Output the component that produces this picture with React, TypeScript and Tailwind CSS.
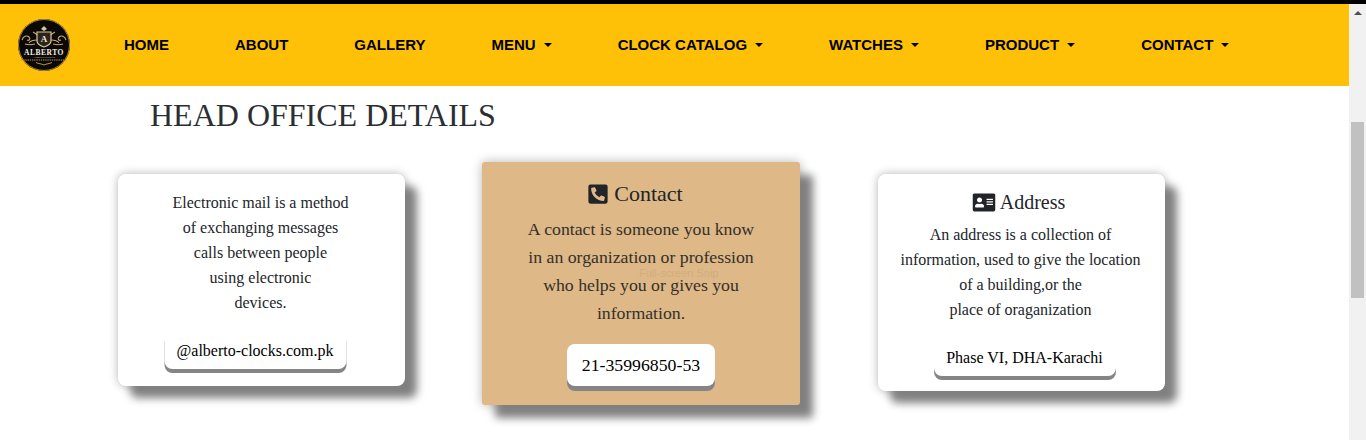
import React from "react";
import { FaPhoneSquareAlt, FaAddressCard } from "react-icons/fa";

const navItems: [string, boolean][] = [
  ["HOME", false],
  ["ABOUT", false],
  ["GALLERY", false],
  ["MENU", true],
  ["CLOCK CATALOG", true],
  ["WATCHES", true],
  ["PRODUCT", true],
  ["CONTACT", true],
];

function Logo() {
  return (
    <svg width="52" height="52" viewBox="0 0 52 52" className="shrink-0">
      <circle cx="26" cy="26" r="26" fill="#0b0906" />
      <circle cx="26" cy="26" r="25.5" fill="none" stroke="#a8823f" strokeWidth="1" />
      <g fill="none" stroke="#c7a873" strokeWidth="1.1">
        <path d="M4 21c1-4 5-5 7-3s0 4-2 3M11 24c2-3 5-3 8-3" />
        <path d="M48 21c-1-4-5-5-7-3s0 4 2 3M41 24c-2-3-5-3-8-3" />
        <path d="M7 25c3 1 6 1 10 0M45 25c-3 1-6 1-10 0" />
        <path d="M15 13c2 1 4 2 5 4M37 13c-2 1-4 2-5 4" />
      </g>
      <path d="M19 13h14v9c0 3-4 5-7 6-3-1-7-3-7-6z" fill="#2a241a" stroke="#d8c6a0" strokeWidth="1.2" />
      <path d="M23 10l3-3 3 3-3 2z" fill="#d8c6a0" />
      <text x="26" y="23" textAnchor="middle" fontFamily="Liberation Serif, serif" fontWeight="700" fontSize="9" fill="#f1e6cf">A</text>
      <text x="26" y="35.500" textAnchor="middle" fontFamily="Liberation Serif, serif" fontWeight="700" fontSize="7.500" letterSpacing="0.5" fill="#f4efe6">ALBERTO</text>
      <text x="26" y="39" textAnchor="middle" fontFamily="Liberation Sans, sans-serif" fontSize="2.400" fill="#b9a98a">ALBERTO CLOCKS</text>
      <path d="M3 41h46" stroke="#b6945a" strokeWidth="1" strokeDasharray="1.4 0.8" />
      <path d="M18 43.500c3 1.500 5 1 8 2.500 3-1.500 5-1 8-2.500" stroke="#b6945a" strokeWidth="1" fill="none" />
    </svg>
  );
}

function NavBar() {
  return (
    <nav className="flex h-[82px] items-center bg-[#ffc107] pl-[18px] pr-4">
      <Logo />
      <ul className="ml-[54px] flex items-center gap-[66px] font-['Liberation_Sans',sans-serif] text-[15px] font-bold leading-5 text-black">
        {navItems.map(([label, caret]) => (
          <li key={label} className="flex items-center whitespace-nowrap">
            {label}
            {caret && (
              <span className="ml-[8px] h-0 w-0 border-x-[4px] border-t-[4px] border-x-transparent border-t-black" />
            )}
          </li>
        ))}
      </ul>
    </nav>
  );
}

function Pill({ children, wide }: { children: React.ReactNode; wide?: boolean }) {
  return (
    <div
      className={
        wide
          ? "flex h-[42px] w-[148px] items-center justify-center rounded-lg bg-white text-[17.760px] text-black shadow-[0_5px_0_#858585]"
          : "flex h-[38px] w-[182px] items-center justify-center rounded-lg bg-white text-[16px] text-black shadow-[0_4px_0_#858585]"
      }
    >
      {children}
    </div>
  );
}

function Cards() {
  return (
    <div className="relative flex items-start pl-[118px] font-['Liberation_Serif',serif] text-[#212529]">
      <section className="mt-[12px] flex w-[287px] flex-col items-center rounded-lg bg-white pb-[17px] pt-4 text-center text-[16px] leading-[25px] shadow-[12px_12px_8px_#808080,0_0_10px_#b5b5b5]">
        <p className="-translate-x-[1px]">
          Electronic mail is a method
          <br />
          of exchanging messages
          <br />
          calls between people
          <br />
          using electronic
          <br />
          devices.
        </p>
        <div className="mt-4 -translate-x-[6.500px]">
          <Pill>@alberto-clocks.com.pk</Pill>
        </div>
      </section>

      <section className="relative ml-[77px] flex w-[318px] flex-col items-center rounded-[3px] bg-[#deb887] pb-[19px] pt-[18px] text-center text-[17.760px] leading-[28px] shadow-[13px_13px_9px_#808080,0_0_11px_#b5b5b5]">
        <h3 className="mb-[7px] flex -translate-x-[6px] items-center text-[22px] leading-[28px]">
          <FaPhoneSquareAlt className="mr-[5px] text-[22px]" />
          Contact
        </h3>
        <p className="text-[#33302b]">
          A contact is someone you know
          <br />
          in an organization or profession
          <br />
          who helps you or gives you
          <br />
          information.
        </p>
        <div className="mt-[17px]">
          <Pill wide>21-35996850-53</Pill>
        </div>
        <span className="absolute left-[157px] top-[104px] font-['Liberation_Sans',sans-serif] text-[11px] leading-[14px] text-[#d2ae7f]">
          Full-screen Snip
        </span>
      </section>

      <section className="ml-[78px] mt-[12px] flex w-[287px] flex-col items-center rounded-lg bg-white pb-[15px] pt-4 text-center text-[16px] leading-[25px] shadow-[12px_12px_8px_#808080,0_0_10px_#b5b5b5]">
        <h3 className="mb-2 flex -translate-x-[2.500px] items-center text-[20px] leading-6">
          <FaAddressCard className="mr-[4px] text-[23px]" />
          Address
        </h3>
        <p className="-translate-x-[1px]">
          An address is a collection of
          <br />
          information, used to give the location
          <br />
          of a building,or the
          <br />
          place of oraganization
        </p>
        <div className="mt-4 translate-x-[3px]">
          <Pill>Phase VI, DHA-Karachi</Pill>
        </div>
      </section>
    </div>
  );
}

function ScrollBar() {
  return (
    <div className="flex h-full w-[17px] shrink-0 flex-col items-center bg-[#f1f1f1]">
      <span className="mt-[7px] h-0 w-0 border-x-[4px] border-b-[4px] border-x-transparent border-b-[#505050]" />
      <div className="mt-[107px] h-[176px] w-[13px] bg-[#c1c1c1]" />
    </div>
  );
}

export default function App() {
  return (
    <div className="flex h-[440px] w-[1366px] flex-col overflow-hidden bg-white">
      <div className="h-[4px] shrink-0 bg-black" />
      <div className="flex min-h-0 flex-1">
        <main className="min-w-0 flex-1">
          <NavBar />
          <h2 className="pl-[150px] pt-[10px] font-['Liberation_Serif',serif] text-[32px] font-normal leading-[38px] text-[#2b2f33]">
            HEAD OFFICE DETAILS
          </h2>
          <div className="mt-[28px]">
            <Cards />
          </div>
        </main>
        <ScrollBar />
      </div>
    </div>
  );
}
